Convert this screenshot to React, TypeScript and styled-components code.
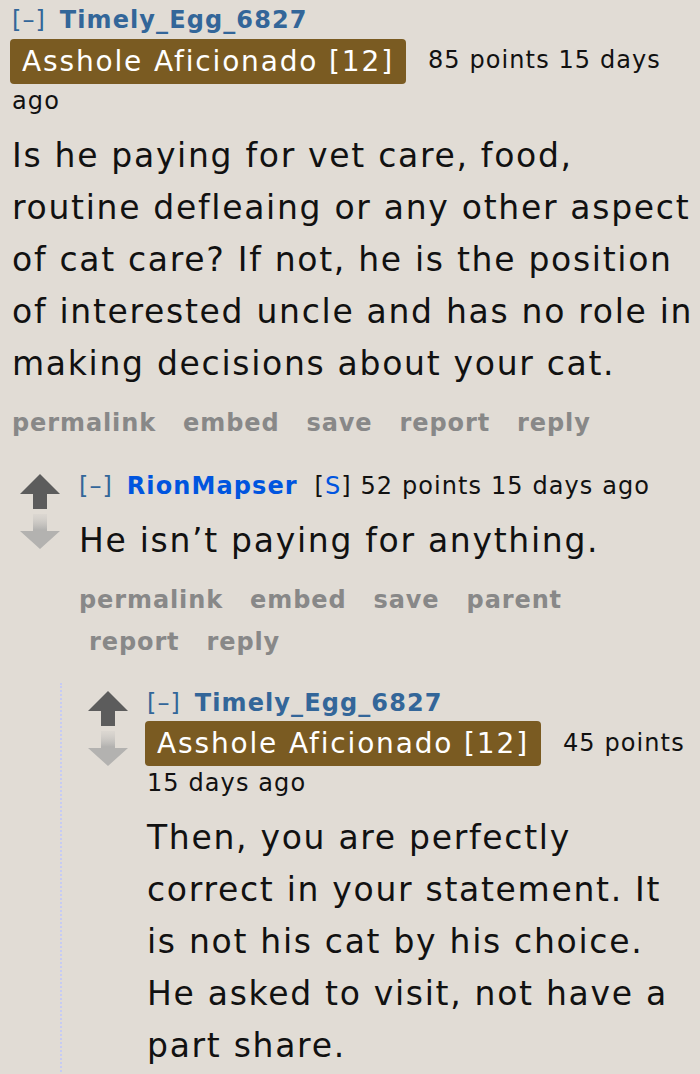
import styled, { createGlobalStyle } from "styled-components";

const GlobalStyle = createGlobalStyle`
    body {
        margin: 0;
        background: #e1dcd5;
        font-family: "DejaVu Sans", Verdana, sans-serif;
        color: #111;
    }
`

const Page = styled.div`
    width: 700px;
    height: 1074px;
    overflow: hidden;
    padding: 0 6px 0 0;
    box-sizing: border-box;
`

const Comment = styled.div<{ $indent?: number }>`
    display: flex;
    align-items: flex-start;
    padding-left: ${props => props.$indent ?? 0}px;
`

const Arrows = styled.div`
    width: 40px;
    flex-shrink: 0;
    display: flex;
    flex-direction: column;
    align-items: center;
    gap: 5px;
    margin-top: 8px;
    margin-right: 19px;
`

const Entry = styled.div<{ $pad?: number }>`
    flex: 1;
    min-width: 0;
    padding-left: ${props => props.$pad ?? 0}px;
`

const Tagline = styled.div`
    font-size: 24px;
    letter-spacing: 1.1px;
    line-height: 40px;
    color: #111;
`

const Expand = styled.span`
    color: #369;
    margin-right: 5px;
`

const Author = styled.span<{ $op?: boolean }>`
    color: ${props => props.$op ? "#0055df" : "#369"};
    font-weight: bold;
    margin-right: 8px;
`

const Submitter = styled.span`
    span {
        color: #0055df;
    }
`

const Flair = styled.span`
    display: inline-block;
    background: #7a5b22;
    color: #fff;
    font-size: 28px;
    letter-spacing: 1.85px;
    line-height: 45px;
    height: 45px;
    padding: 0 12px 0 12px;
    border-radius: 4px;
    margin: -3px 22px -3px -2px;
    vertical-align: middle;
`

const Body = styled.p`
    margin: 9px 0 0 0;
    font-size: 33px;
    letter-spacing: 1.7px;
    line-height: 52px;
`

const FlatList = styled.ul`
    list-style: none;
    margin: 12px 0 0 0;
    padding: 0 24px 0 0;
    display: flex;
    flex-wrap: wrap;
    column-gap: 17px;
    row-gap: 0;
    li {
        font-size: 24px;
        letter-spacing: 0.9px;
        line-height: 42px;
        font-weight: bold;
        color: #888;
        padding-left: 10px;
    }
    li:first-child {
        padding-left: 0;
    }
`

const Thread = styled.div`
    margin-top: 22px;
`

const Child = styled.div`
    margin-left: 60px;
    border-left: 2px dotted #c6cbf4;
    margin-top: 20px;
`

function UpArrow() {
    return (
        <svg width="40" height="35" viewBox="0 0 40 35">
            <path d="M20 0 L40 20 L27 20 L27 35 L13 35 L13 20 L0 20 Z" fill="#5c5c5c" />
        </svg>
    )
}

function DownArrow() {
    return (
        <svg width="40" height="35" viewBox="0 0 40 35">
            <defs>
                <linearGradient id="fade" x1="0" y1="0" x2="0" y2="1">
                    <stop offset="0" stopColor="#cfccc8" stopOpacity="0.3" />
                    <stop offset="0.45" stopColor="#b3b2b0" />
                    <stop offset="1" stopColor="#b3b2b0" />
                </linearGradient>
            </defs>
            <path d="M13 0 L27 0 L27 17 L40 17 L20 35 L0 17 L13 17 Z" fill="url(#fade)" />
        </svg>
    )
}

function Actions({ items }: { items: string[] }) {
    return (
        <FlatList>
            {items.map(item => (
                <li key={item}>{item}</li>
            ))}
        </FlatList>
    )
}

function App() {
    return (
        <Page>
            <GlobalStyle />
            <Entry $pad={12}>
                <Tagline>
                    <Expand>[–]</Expand>{" "}
                    <Author>Timely_Egg_6827</Author>
                    <Flair>Asshole Aficionado [12]</Flair>
                    85 points 15 days ago
                </Tagline>
                <Body>
                    Is he paying for vet care, food, routine defleaing or any other aspect of cat care? If not, he is the position of interested uncle and has no role in making decisions about your cat.
                </Body>
                <Actions items={["permalink", "embed", "save", "report", "reply"]} />
            </Entry>
            <Thread>
                <Comment $indent={20}>
                    <Arrows>
                        <UpArrow />
                        <DownArrow />
                    </Arrows>
                    <Entry>
                        <Tagline>
                            <Expand>[–]</Expand>{" "}
                            <Author $op>RionMapser</Author>{" "}
                            <Submitter>[<span>S</span>]</Submitter> 52 points 15 days ago
                        </Tagline>
                        <Body>He isn’t paying for anything.</Body>
                        <Actions items={["permalink", "embed", "save", "parent", "report", "reply"]} />
                    </Entry>
                </Comment>
                <Child>
                    <Comment $indent={26}>
                        <Arrows>
                            <UpArrow />
                            <DownArrow />
                        </Arrows>
                        <Entry>
                            <Tagline>
                                <Expand>[–]</Expand>{" "}
                                <Author>Timely_Egg_6827</Author>
                                <Flair>Asshole Aficionado [12]</Flair>
                                45 points 15 days ago
                            </Tagline>
                            <Body>
                                Then, you are perfectly correct in your statement. It is not his cat by his choice. He asked to visit, not have a part share.
                            </Body>
                        </Entry>
                    </Comment>
                </Child>
            </Thread>
        </Page>
    )
}

export default App;
